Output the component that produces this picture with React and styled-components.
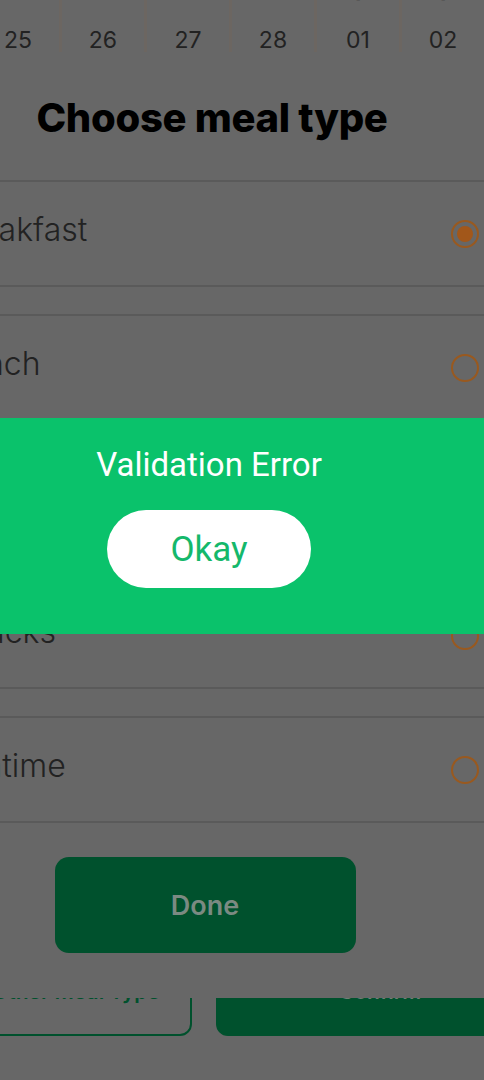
import React from 'react'
import styled, {createGlobalStyle} from 'styled-components'

const GlobalStyle = createGlobalStyle`
  html, body {
    margin: 0;
    padding: 0;
    background: #676767;
  }
  * {
    box-sizing: border-box;
  }
`

const Screen = styled.div`
  position: relative;
  width: 484px;
  height: 1080px;
  overflow: hidden;
  display: flex;
  flex-direction: column;
  background: #676767;
  font-family: 'Inter', 'Liberation Sans', sans-serif;
`

const DateStrip = styled.div`
  display: flex;
  margin: -16px 0 0 -23px;
`

const DayCell = styled.div`
  flex: 0 0 85px;
  height: 68px;
  display: flex;
  flex-direction: column;
  align-items: center;
  border-right: 3px solid #6c6661;
`

const DayLetter = styled.span`
  font-size: 16px;
  line-height: 20px;
  color: #2c2c2c;
`

const DayNumber = styled.span`
  margin-top: 22px;
  font-size: 23px;
  line-height: 28px;
  color: #222;
`

// bar of the page behind the sheet, mostly covered by it
const BottomBar = styled.div`
  margin: auto 0 0 -60px;
  padding: 0 0 44px 20px;
  display: grid;
  grid-template-columns: 232px 328px;
  gap: 24px;
`

const BarButton = styled.div`
  height: 96px;
  border-radius: 12px;
  display: flex;
  align-items: flex-end;
  justify-content: center;
  padding-bottom: 30px;
  font-weight: 600;
  font-size: 21px;
  line-height: 24px;
  border: 2px solid #00512d;
  background: ${p => (p.$filled ? '#00512d' : 'transparent')};
  color: ${p => (p.$filled ? '#6f7f76' : '#00512d')};
`

const Sheet = styled.div`
  position: absolute;
  top: 70px;
  left: -60px;
  right: 0;
  bottom: 82px;
  background: #676767;
  display: flex;
  flex-direction: column;
  align-items: center;
  padding-top: 26px;
`

const Title = styled.h2`
  margin: 0 0 40px 0;
  font-size: 40px;
  line-height: 44px;
  font-weight: 800;
  letter-spacing: -0.3px;
  color: #000;
`

const OptionList = styled.div`
  align-self: stretch;
  display: flex;
  flex-direction: column;
  gap: 27px;
`

const OptionRow = styled.div`
  height: 107px;
  display: flex;
  align-items: center;
  justify-content: space-between;
  padding: 0 5px 8px 8px;
  border-top: 2px solid #5a5a5a;
  border-bottom: 2px solid #5a5a5a;
`

const OptionLabel = styled.span`
  font-size: 32px;
  font-weight: 300;
  color: #222;
`

const Radio = styled.span`
  width: 28px;
  height: 28px;
  margin-top: 8px;
  border-radius: 50%;
  border: 2px solid #99591f;
  display: flex;
  align-items: center;
  justify-content: center;

  &::after {
    content: '';
    width: 16px;
    height: 16px;
    border-radius: 50%;
    background: ${p => (p.$checked ? '#a2571a' : 'transparent')};
  }
`

const DoneButton = styled.div`
  margin-top: 34px;
  width: 301px;
  height: 96px;
  margin-right: 14px;
  border-radius: 14px;
  background: #00512d;
  display: flex;
  align-items: center;
  justify-content: center;
  font-size: 27px;
  font-weight: 600;
  color: #7b8a82;
`

const Banner = styled.div`
  position: absolute;
  top: 418px;
  left: -66px;
  right: 0;
  height: 216px;
  background: #0ac26b;
  display: flex;
  flex-direction: column;
  align-items: center;
  padding-top: 27px;
  font-family: 'Roboto', 'Liberation Sans', sans-serif;
`

const BannerText = styled.div`
  font-size: 33px;
  line-height: 40px;
  color: #fff;
`

const OkayButton = styled.div`
  margin-top: 25px;
  width: 204px;
  height: 78px;
  border-radius: 39px;
  background: #fff;
  display: flex;
  align-items: center;
  justify-content: center;
  font-size: 35px;
  color: #14b86b;
`

const days = [
  {d: 'T', n: '25'},
  {d: 'W', n: '26'},
  {d: 'T', n: '27'},
  {d: 'F', n: '28'},
  {d: 'S', n: '01'},
  {d: 'S', n: '02'},
]

const meals = ['Breakfast', 'Lunch', 'Dinner', 'Snacks', 'Teatime']

const App = () => (
  <Screen>
    <GlobalStyle />
    <DateStrip>
      {days.map(day => (
        <DayCell key={day.n}>
          <DayLetter>{day.d}</DayLetter>
          <DayNumber>{day.n}</DayNumber>
        </DayCell>
      ))}
    </DateStrip>

    <BottomBar>
      <BarButton>Other Meal Type</BarButton>
      <BarButton $filled>Confirm</BarButton>
    </BottomBar>

    <Sheet>
      <Title>Choose meal type</Title>
      <OptionList>
        {meals.map((meal, i) => (
          <OptionRow key={meal}>
            <OptionLabel>{meal}</OptionLabel>
            <Radio $checked={i === 0} />
          </OptionRow>
        ))}
      </OptionList>
      <DoneButton>Done</DoneButton>
    </Sheet>

    <Banner>
      <BannerText>Validation Error</BannerText>
      <OkayButton>Okay</OkayButton>
    </Banner>
  </Screen>
)

export default App
